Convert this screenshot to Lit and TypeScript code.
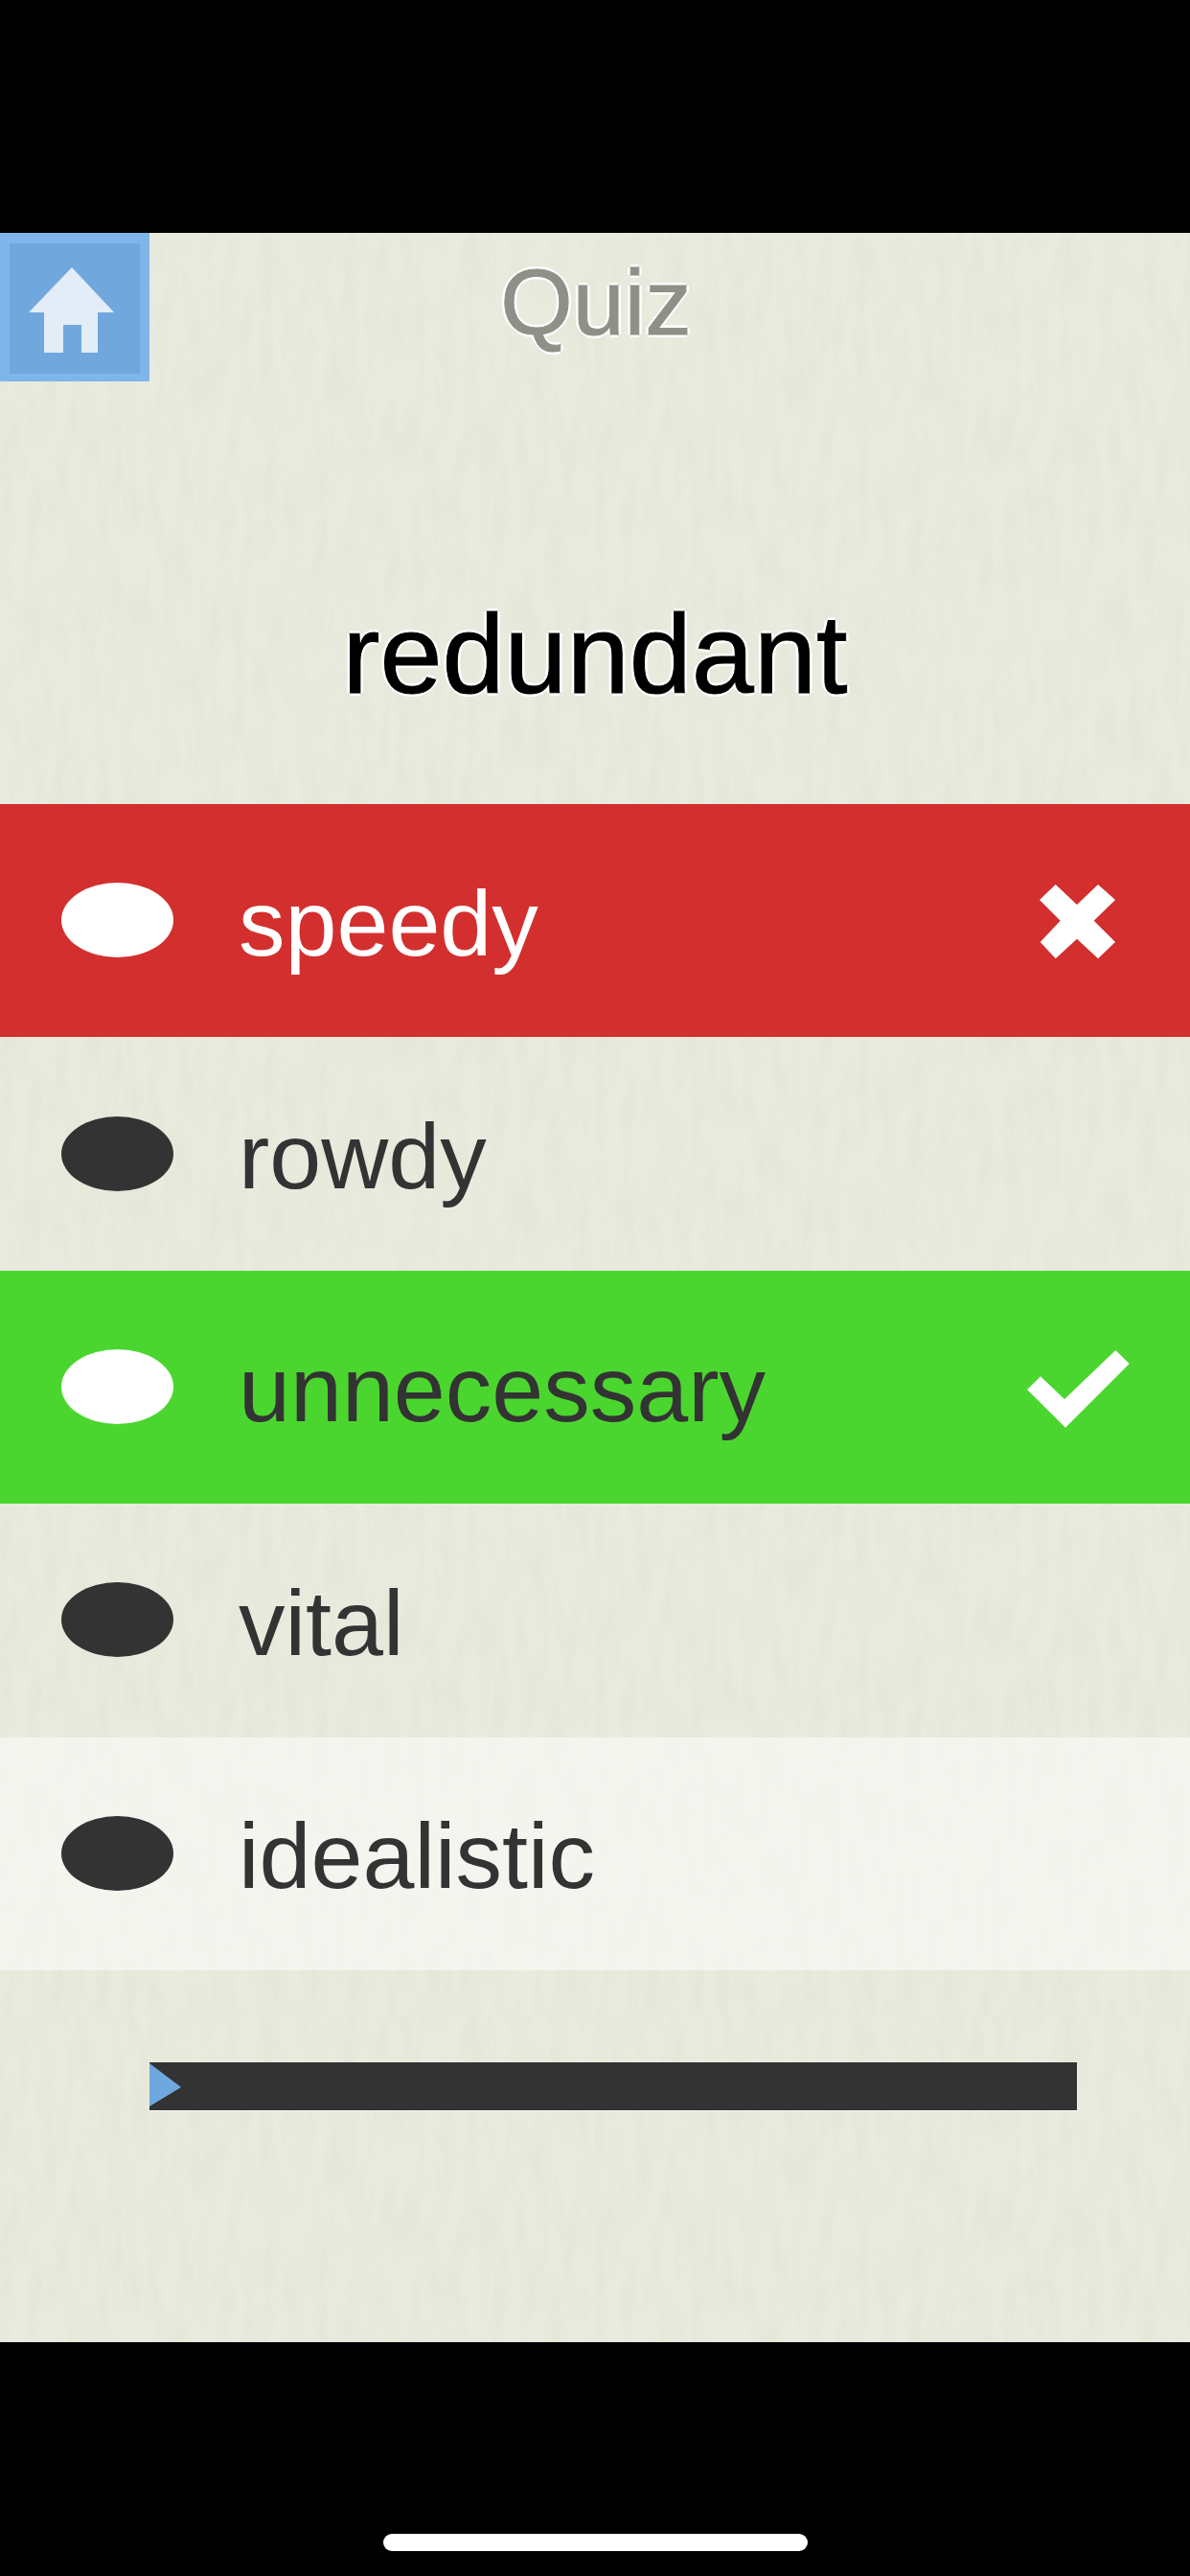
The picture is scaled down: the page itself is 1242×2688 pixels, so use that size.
import { LitElement, html, css, nothing } from "lit";
import { customElement } from "lit/decorators.js";

// paper grain, long vertical fibres like the original texture
const paper =
  "data:image/svg+xml," +
  encodeURIComponent(
    `<svg xmlns="http://www.w3.org/2000/svg" width="620" height="620"><filter id="p"><feTurbulence type="fractalNoise" baseFrequency="0.07 0.016" numOctaves="3" stitchTiles="stitch"/><feColorMatrix values="0 0 0 0 0.6 0 0 0 0 0.62 0 0 0 0 0.5 0.3 0 0 0 -0.1"/></filter><rect width="620" height="620" filter="url(#p)"/></svg>`
  );

type Answer = {
  label: string;
  state?: "wrong" | "right" | "hover";
};

const answers: Answer[] = [
  { label: "speedy", state: "wrong" },
  { label: "rowdy" },
  { label: "unnecessary", state: "right" },
  { label: "vital" },
  { label: "idealistic", state: "hover" },
];

@customElement("app-root")
export class AppRoot extends LitElement {
  renderMark(state?: string) {
    if (state === "wrong") {
      return html`<svg class="mark cross" viewBox="0 0 79 78">
        <polygon
          points="16.7,0 0,16 21.7,37.7 0.7,60 16.7,77.3 39,56.7 61,77.3 79,60 56.7,37.7 79,16 61,0 39,21"></polygon>
      </svg>`;
    }
    if (state === "right") {
      return html`<svg class="mark tick" viewBox="0 0 107 81">
        <polygon points="92.3,0 106.7,14 40,80.7 0,41 14,27.3 39,51"></polygon>
      </svg>`;
    }
    return nothing;
  }

  render() {
    return html`
      <div class="top-bar"></div>
      <main class="quiz" style="background-image:url('${paper}')">
        <header class="header">
          <button class="home" aria-label="Home">
            <svg viewBox="0 0 136 136" class="home-icon">
              <polygon
                points="65,25 109,72 92,72 92,114 75,114 75,85 56,85 56,114 36,114 36,72 20,72"></polygon>
            </svg>
          </button>
          <h1 class="title">Quiz</h1>
          <div></div>
        </header>
        <div class="word">redundant</div>
        <ul class="answers">
          ${answers.map(
            (a) => html`
              <li class="answer ${a.state ?? ""}">
                <span class="dot"></span>
                <span class="label">${a.label}</span>
                ${this.renderMark(a.state)}
              </li>
            `
          )}
        </ul>
        <div class="player">
          <div class="track">
            <svg class="play" viewBox="0 0 33 45">
              <polygon points="0,0 33,25 0,45"></polygon>
            </svg>
          </div>
        </div>
      </main>
      <footer class="bottom-bar"><div class="home-indicator"></div></footer>
    `;
  }

  static styles = css`
    :host {
      display: flex;
      flex-direction: column;
      width: 1242px;
      height: 2688px;
      background: #000;
      font-family: "Liberation Sans", Arial, sans-serif;
    }

    .top-bar {
      height: 243px;
      flex: none;
    }

    .quiz {
      height: 2201px;
      flex: none;
      display: flex;
      flex-direction: column;
      background-color: #e9ebde;
    }

    .header {
      display: grid;
      grid-template-columns: 156px 1fr 156px;
      height: 155px;
    }

    .home {
      display: block;
      width: 156px;
      height: 155px;
      padding: 11px 10px 8px 10px;
      border: none;
      background: #7fb6e9;
    }

    .home-icon {
      display: block;
      width: 136px;
      height: 136px;
      background: #70a8de;
      fill: #e3edf8;
    }

    .title {
      margin: 0;
      padding-top: 18px;
      padding-left: 2px;
      text-align: center;
      font-size: 97px;
      line-height: 110px;
      font-weight: 400;
      color: #8f9088;
      -webkit-text-stroke: 1px #8f9088;
      text-shadow: -3px 0 0 #fff, 3px 0 0 #fff, 0 -3px 0 #fff, 0 3px 0 #fff;
    }

    .word {
      height: 441px;
      padding-top: 218px;
      box-sizing: border-box;
      text-align: center;
      font-size: 117px;
      line-height: 134px;
      color: #000;
      -webkit-text-stroke: 1px #000;
      text-shadow: -3px 0 0 #fff, 3px 0 0 #fff, 0 -3px 0 #fff, 0 3px 0 #fff;
    }

    .answers {
      margin: 0;
      padding: 0;
      list-style: none;
    }

    .answer {
      display: flex;
      align-items: center;
      height: 243.4px;
      padding-left: 64px;
      color: #333;
      fill: #fff;
    }

    .answer.wrong {
      background: #d32f2f;
      color: #fff;
    }

    .answer.right {
      background: #4bd62f;
    }

    .answer.hover {
      background: rgba(255, 255, 255, 0.52);
    }

    .dot {
      flex: none;
      width: 117px;
      height: 78px;
      margin-top: -1px;
      border-radius: 50%;
      background: #333;
    }

    .wrong .dot,
    .right .dot {
      background: #fff;
    }

    .label {
      margin-left: 68px;
      padding-top: 6px;
      font-size: 97px;
      line-height: 110px;
    }

    .mark {
      display: block;
      margin-left: auto;
    }

    .cross {
      width: 79px;
      height: 78px;
      margin-top: 3px;
      margin-right: 78px;
    }

    .tick {
      width: 107px;
      height: 81px;
      margin-top: 5px;
      margin-right: 63px;
    }

    .player {
      padding: 96px 118px 0 156px;
    }

    .track {
      height: 50px;
      background: #333;
      box-shadow: 0 1px 0 rgba(255, 255, 255, 0.7);
    }

    .play {
      display: block;
      width: 33px;
      height: 45px;
      padding-top: 1px;
      fill: #6ea8de;
    }

    .bottom-bar {
      flex: 1;
      display: flex;
      justify-content: center;
      align-items: flex-end;
      padding-bottom: 26px;
    }

    .home-indicator {
      width: 443px;
      height: 18px;
      border-radius: 9px;
      background: #fff;
    }
  `;
}
